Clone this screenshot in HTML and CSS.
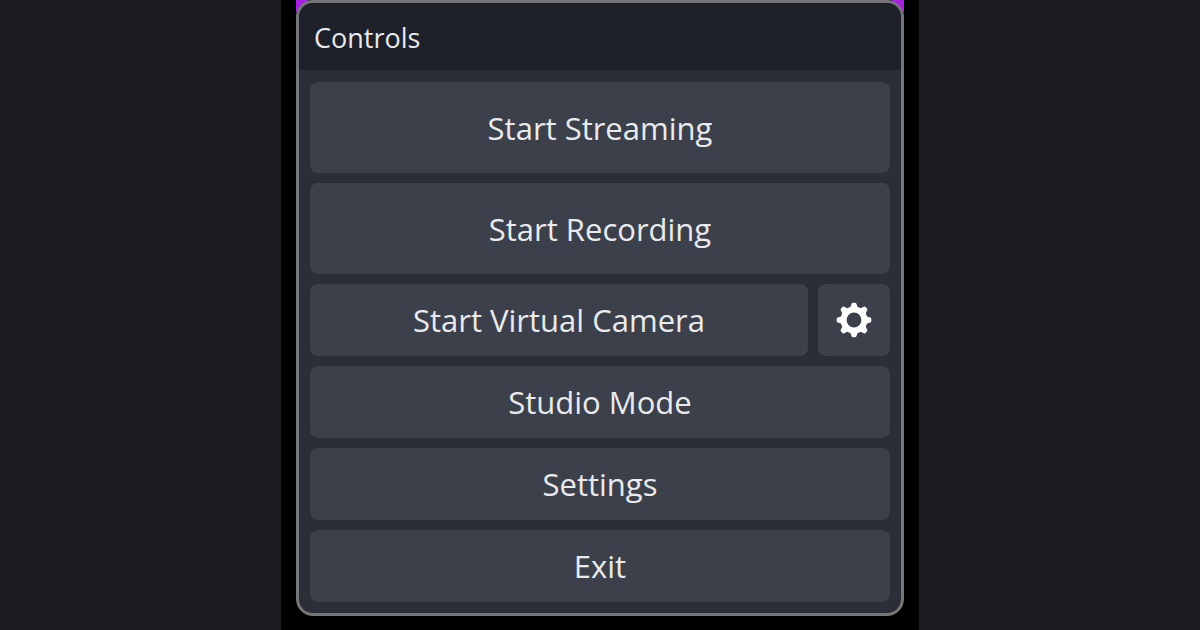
FILE: index.html
```html
<!DOCTYPE html>
<html lang="en">
<head>
<meta charset="utf-8">
<title>Controls</title>
<link rel="stylesheet" href="styles.css">
</head>
<body>
<main class="stage">
  <section class="dock" aria-labelledby="dock-title">
    <h1 class="dock-title" id="dock-title">Controls</h1>
    <div class="controls">
      <button class="control control-large" type="button">Start Streaming</button>
      <button class="control control-large" type="button">Start Recording</button>
      <div class="control-row">
        <button class="control" type="button">Start Virtual Camera</button>
        <button class="control control-icon" type="button" aria-label="Virtual camera settings">
          <svg class="gear" viewBox="-18 -18 36 36" aria-hidden="true">
            <circle r="10.400" fill="none" stroke="currentColor" stroke-width="6"/>
            <g fill="currentColor" stroke="currentColor" stroke-width="3" stroke-linejoin="round">
              <path id="teeth" d="M-2.600-11L-1-15.800H1L2.600-11ZM-2.600 11L-1 15.800H1L2.600 11ZM-11-2.600L-15.800-1V1L-11 2.600ZM11-2.600L15.800-1V1L11 2.600Z"/>
              <use href="#teeth" transform="rotate(45)"/>
            </g>
          </svg>
        </button>
      </div>
      <button class="control" type="button">Studio Mode</button>
      <button class="control" type="button">Settings</button>
      <button class="control" type="button">Exit</button>
    </div>
  </section>
</main>
</body>
</html>
```
FILE: styles.css
```css
* { box-sizing: border-box; }

body {
  margin: 0;
  min-height: 100vh;
  display: flex;
  justify-content: center;
  background: #1c1d22;
  color: #e9eaec;
  font-family: "Open Sans", "Noto Sans", sans-serif;
}

.stage {
  width: 638px;
  max-width: 100%;
  padding: 0 15px 14px;
  background:
    linear-gradient(#a41fe0, #a41fe0) 15px 0 / 12px 12px no-repeat,
    linear-gradient(#a41fe0, #a41fe0) right 15px top 0 / 12px 12px no-repeat,
    #000;
}

.dock {
  overflow: hidden;
  border: 3px solid #75757a;
  border-radius: 17px;
  background: #2b2d37;
}

.dock-title {
  margin: 0;
  padding: 17px 15px 14px;
  background: #1e2129;
  font-size: 27px;
  font-weight: 400;
  line-height: 36px;
}

.controls {
  display: flex;
  flex-direction: column;
  gap: 10px;
  padding: 12px 11px 11px;
}

.control-row {
  display: flex;
  gap: 10px;
}

.control {
  flex: 1 0 auto;
  min-height: 72px;
  padding: 0 12px;
  border: 0;
  border-radius: 8px;
  background: #3c404b;
  color: inherit;
  font: inherit;
  font-size: 31px;
  line-height: 44px;
}

.control-large { min-height: 91px; }

.control-icon {
  flex: 0 0 72px;
  display: flex;
  align-items: center;
  justify-content: center;
  padding: 0;
  color: #fff;
}

.gear {
  width: 36px;
  height: 36px;
}
```
